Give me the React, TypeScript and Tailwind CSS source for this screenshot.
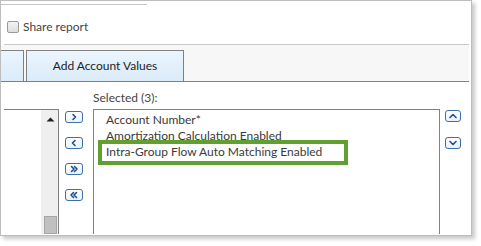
import React from "react";

const Chevron = ({ d }: { d: string }) => (
  <svg width="10" height="8" viewBox="0 0 10 8" fill="none">
    <path d={d} stroke="#1f4e8c" strokeWidth="1.6" strokeLinecap="round" strokeLinejoin="round" />
  </svg>
);

const ArrowBtn = ({ d, w = "w-[18px]" }: { d: string; w?: string }) => (
  <div
    className={`${w} h-[12px] rounded-[3px] border border-[#3f6fa8] bg-gradient-to-b from-white to-[#e9f1fa] flex items-center justify-center`}
  >
    <Chevron d={d} />
  </div>
);

export default function App() {
  return (
    <div className="w-[481px] h-[246px] bg-white" style={{ fontFamily: "Lato, 'Open Sans', sans-serif" }}>
      <div className="w-[472px] h-[236px] border border-[#bdbdbd] bg-white shadow-[3px_3px_4px_rgba(0,0,0,0.22)] overflow-hidden flex flex-col">
        {/* top area */}
        <div className="h-[43px] flex flex-col">
          <div className="mt-[3px] h-px w-[146px] bg-[#c4c4c4]" />
          <div className="mt-[15px] flex items-center">
            <div className="ml-[6px] w-[12px] h-[12px] rounded-[2px] border border-[#9a9a9a] bg-gradient-to-b from-[#f4f4f4] to-[#dedede]" />
            <span className="ml-[4px] text-[12px] leading-[14px] text-[#444]">Share report</span>
          </div>
        </div>
        <div className="ml-[3px] mr-[2px] h-px bg-[#c8c8c8]" />
        {/* tab bar */}
        <div className="h-[37px] mr-[2px] bg-[#f7f7f7] border-b border-[#808080] flex items-end pt-[5px]">
          <div className="w-[23px] h-[31px] border-r border-t border-[#808080] bg-gradient-to-b from-[#eaf5fe] to-[#dbebf9]" />
          <div className="ml-[2px] w-[158px] h-[31px] border border-b-0 border-[#808080] bg-gradient-to-b from-[#eaf5fe] to-[#dbebf9] flex items-center justify-center text-[12px] text-[#222]">
            Add Account Values
          </div>
        </div>
        {/* lower panel */}
        <div className="flex-1 flex flex-col min-h-0">
          <div className="pl-[92px] pt-[8px] h-[27px] text-[12px] leading-[16px] text-[#444]">Selected (3):</div>
          <div className="flex-1 flex items-stretch pb-[1px] min-h-0">
            {/* left list */}
            <div className="ml-[3px] w-[55px] border-t border-r border-[#828282] bg-white flex justify-end">
              <div className="w-[17px] bg-[#efefef] flex flex-col items-center justify-between">
                <svg width="9" height="5" viewBox="0 0 9 5" className="mt-[7px] ml-[1px]">
                  <path d="M0.5 4.5 L4.5 0.5 L8.5 4.5 Z" fill="#222" />
                </svg>
                <div className="w-[13px] h-[18px] ml-[1px] bg-[#c0c0c0] border border-[#a6a6a6]" />
              </div>
            </div>
            {/* move buttons */}
            <div className="ml-[6px] mt-[2px] flex flex-col gap-[14px]">
              <ArrowBtn d="M4 1.5 L6.5 4 L4 6.5" />
              <ArrowBtn d="M6 1.5 L3.5 4 L6 6.5" />
              <ArrowBtn d="M2.5 1.5 L5 4 L2.5 6.5 M5.5 1.5 L8 4 L5.5 6.5" />
              <ArrowBtn d="M4.5 1.5 L2 4 L4.5 6.5 M7.5 1.5 L5 4 L7.5 6.5" />
            </div>
            {/* selected list */}
            <div className="relative ml-[10px] w-[347px] border-t border-l border-r border-[#828282] bg-white pt-[2px] text-[12px] leading-[16px] text-[#3a3a3a]">
              <div className="pl-[12px]">Account Number*</div>
              <div className="pl-[12px]">Amortization Calculation Enabled</div>
              <div className="pl-[12px]">Intra-Group Flow Auto Matching Enabled</div>
              <div className="absolute left-[4px] top-[30px] w-[250px] h-[25px] border-4 border-[#60a030]" />
            </div>
            {/* up/down */}
            <div className="ml-[5px] mt-[1px] flex flex-col gap-[15px]">
              <ArrowBtn w="w-[16px]" d="M2 5.5 L5 2.5 L8 5.5" />
              <ArrowBtn w="w-[16px]" d="M2 2.5 L5 5.5 L8 2.5" />
            </div>
          </div>
        </div>
      </div>
    </div>
  );
}
